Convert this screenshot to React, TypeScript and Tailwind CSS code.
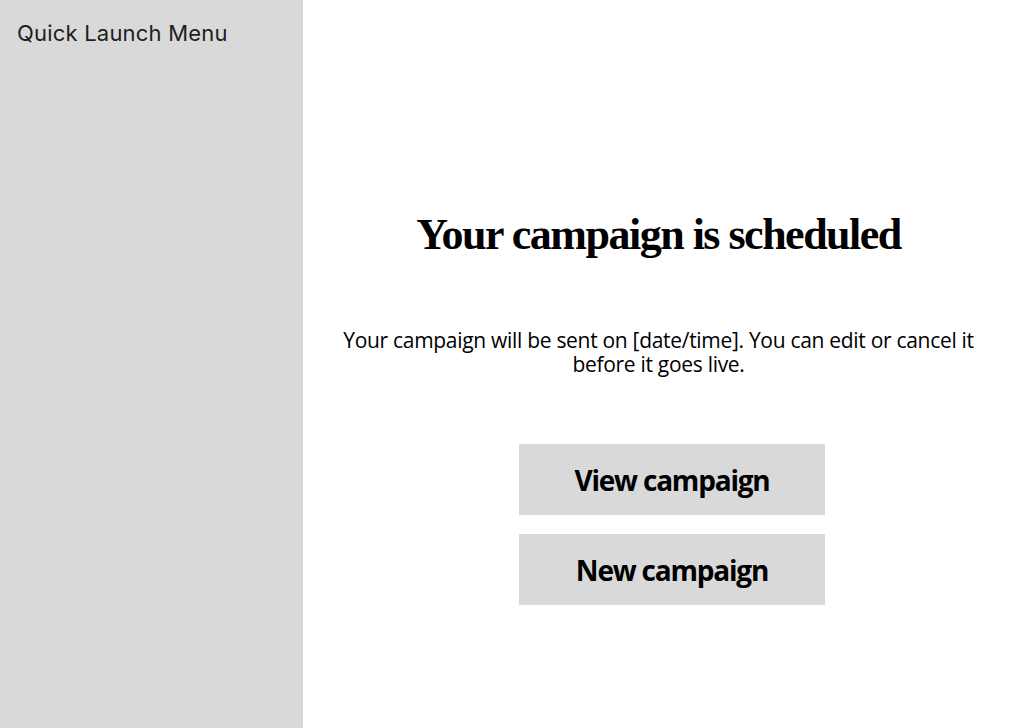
const App = () => {
  return (
    <div className="flex h-[728px] w-[1024px] bg-white">
      <aside className="w-[303px] shrink-0 bg-[#d9d9d9] px-[17px] pt-[20px]">
        <p className="font-['Inter',sans-serif] text-[22px] leading-[26px] tracking-[0.2px] text-[#1e1e1e]">
          Quick Launch Menu
        </p>
      </aside>
      {/* main */}
      <main className="flex flex-1 flex-col items-center pr-[10px] pt-[206px]">
        <h1 className="font-['Liberation_Serif',serif] text-[44px] font-bold leading-[58px] tracking-[-1.5px] text-black">
          Your campaign is scheduled
        </h1>
        <p className="mt-[64px] w-[660px] text-center font-['Open_Sans',sans-serif] text-[21px] leading-[24px] tracking-[-0.3px] text-black">
          Your campaign will be sent on [date/time]. You can edit or cancel it
          before it goes live.
        </p>
        <div className="ml-[27px] mt-[68px] flex flex-col gap-[19px]">
          <button className="flex h-[71px] w-[306px] items-center justify-center bg-[#d9d9d9] font-['Open_Sans',sans-serif] text-[28px] font-bold tracking-[-1.2px] text-black">
            View campaign
          </button>
          <button className="flex h-[71px] w-[306px] items-center justify-center bg-[#d9d9d9] font-['Open_Sans',sans-serif] text-[28px] font-bold tracking-[-1.2px] text-black">
            New campaign
          </button>
        </div>
      </main>
    </div>
  );
};

export default App;
